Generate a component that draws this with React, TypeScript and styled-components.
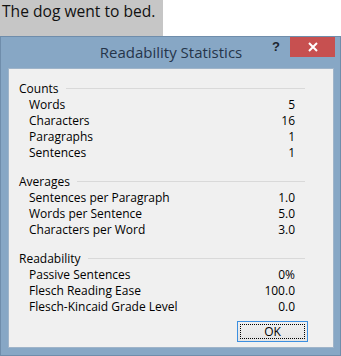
import React from 'react';
import styled, { createGlobalStyle } from 'styled-components';

const GlobalStyle = createGlobalStyle`
  html, body {
    margin: 0;
    padding: 0;
    background: #ffffff;
  }
  body {
    width: 341px;
    height: 356px;
    overflow: hidden;
  }
`;

const Page = styled.div`
  display: flex;
  flex-direction: column;
  width: 341px;
  height: 356px;
`;

const Selection = styled.div`
  width: 163px;
  height: 36px;
  background: #c6c6c6;
  box-sizing: border-box;
  padding: 0 0 0 2px;
  font-family: 'Open Sans', 'Noto Sans', sans-serif;
  font-size: 15.6px;
  line-height: 22px;
  color: #111;
`;

const Dialog = styled.div`
  flex: 1;
  display: flex;
  flex-direction: column;
  background: #87a7c5;
  border: 1px solid #6f8dab;
  box-sizing: border-box;
  padding: 0 6px 7px 7px;
  font-family: 'Open Sans', 'Noto Sans', sans-serif;
`;

const TitleBar = styled.div`
  height: 31px;
  display: grid;
  grid-template-columns: 1fr auto 1fr;
  align-items: start;
`;

const Title = styled.div`
  grid-column: 2;
  font-size: 15px;
  line-height: 31px;
  color: #25354a;
`;

const Controls = styled.div`
  grid-column: 3;
  justify-self: end;
  display: flex;
  align-items: center;
  gap: 10px;
  margin-right: -1px;
`;

const Help = styled.span`
  font-family: 'Liberation Sans', Arial, sans-serif;
  font-weight: bold;
  font-size: 13px;
  line-height: 20px;
  color: #1c2530;
`;

const Close = styled.div`
  width: 45px;
  height: 20px;
  background: #c75050;
  display: flex;
  align-items: center;
  justify-content: center;
`;

const Body = styled.div`
  flex: 1;
  background: #f0f0f0;
  border: 1px solid #9fb4c9;
  display: flex;
  flex-direction: column;
  padding: 11px 0 5px 0;
  font-size: 12px;
  color: #000;
`;

const Group = styled.section`
  display: flex;
  flex-direction: column;
  padding: 0 28px 0 10px;
  & + & {
    margin-top: 12px;
  }
`;

const Heading = styled.div`
  display: flex;
  align-items: center;
  gap: 7px;
  height: 17px;
  line-height: 17px;
  &::after {
    content: '';
    flex: 1;
    height: 1px;
    margin-top: -1px;
    background: #d9d9d9;
  }
`;

const Row = styled.div`
  display: flex;
  justify-content: space-between;
  height: 16px;
  line-height: 16px;
  padding: 0 10px 0 10px;
`;

const Footer = styled.div`
  margin-top: auto;
  display: flex;
  justify-content: flex-end;
  padding-right: 25px;
`;

const Button = styled.button`
  width: 71px;
  height: 21px;
  padding: 2px;
  border: 1px solid #3c8fe0;
  background: linear-gradient(#f0f0f0, #e4e4e4);
  font-family: inherit;
  font-size: 12px;
  color: #000;
  box-sizing: border-box;
  display: flex;
`;

const Focus = styled.span`
  flex: 1;
  border: 1px dotted #000;
  display: flex;
  align-items: center;
  justify-content: center;
  line-height: 13px;
`;

const groups = [
  {
    title: 'Counts',
    rows: [
      ['Words', '5'],
      ['Characters', '16'],
      ['Paragraphs', '1'],
      ['Sentences', '1'],
    ],
  },
  {
    title: 'Averages',
    rows: [
      ['Sentences per Paragraph', '1.0'],
      ['Words per Sentence', '5.0'],
      ['Characters per Word', '3.0'],
    ],
  },
  {
    title: 'Readability',
    rows: [
      ['Passive Sentences', '0%'],
      ['Flesch Reading Ease', '100.0'],
      ['Flesch-Kincaid Grade Level', '0.0'],
    ],
  },
];

export default function App() {
  return (
    <Page>
      <GlobalStyle />
      <Selection>The dog went to bed.</Selection>
      <Dialog>
        <TitleBar>
          <Title>Readability Statistics</Title>
          <Controls>
            <Help>?</Help>
            <Close>
              <svg width="10" height="10" viewBox="0 0 10 10">
                <path d="M1 1L9 9M9 1L1 9" stroke="#fff" strokeWidth="2" />
              </svg>
            </Close>
          </Controls>
        </TitleBar>
        <Body>
          {groups.map((g) => (
            <Group key={g.title}>
              <Heading>{g.title}</Heading>
              {g.rows.map(([label, value]) => (
                <Row key={label}>
                  <span>{label}</span>
                  <span>{value}</span>
                </Row>
              ))}
            </Group>
          ))}
          <Footer>
            <Button>
              <Focus>OK</Focus>
            </Button>
          </Footer>
        </Body>
      </Dialog>
    </Page>
  );
}
